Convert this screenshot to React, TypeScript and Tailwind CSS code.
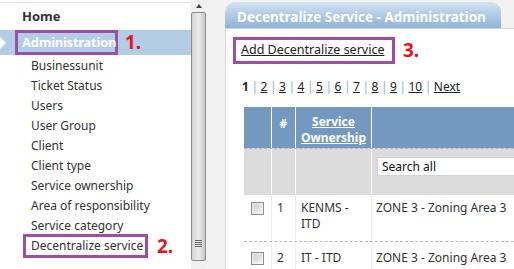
const font = { fontFamily: '"Noto Sans", "Open Sans", Arial, sans-serif' };

const menu = [
  "Businessunit",
  "Ticket Status",
  "Users",
  "User Group",
  "Client",
  "Client type",
  "Service ownership",
  "Area of responsibility",
  "Service category",
];

const pages = ["2", "3", "4", "5", "6", "7", "8", "9", "10", "Next"];

function Sidebar() {
  return (
    <div className="w-[191px] shrink-0 bg-white">
      <div className="mt-[2px] border-t border-[#e4e4e4]" />
      <div className="flex h-[27px] items-center pl-[22px] text-[13px] font-bold text-[#333]">Home</div>
      <div className="relative flex h-[25px] items-center bg-[#b3cde6]">
        <div className="absolute left-0 top-[7px] h-0 w-0 border-y-[6px] border-l-[6px] border-y-transparent border-l-white" />
        <div className="ml-[15px] flex h-[25px] w-[103px] items-center border-[3px] border-[#9b4fa5] pl-[4px] text-[13px] font-bold tracking-[-0.25px] text-white">
          Administration
        </div>
        <span className="ml-[7px] text-[19px] font-bold leading-none text-[#e8141c]">1.</span>
      </div>
      <div className="pt-[1px]">
        {menu.map((m) => (
          <div key={m} className="flex h-[20px] items-center pl-[31px] text-[12px] text-[#333]">
            {m}
          </div>
        ))}
        <div className="flex h-[20px] items-center pl-[23px]">
          <div className="flex h-[24px] w-[125px] items-center border-[3px] border-[#9b4fa5] pl-[5px] text-[12px] text-[#333]">
            Decentralize service
          </div>
          <span className="ml-[9px] text-[19px] font-bold leading-none text-[#e8141c]">2.</span>
        </div>
      </div>
    </div>
  );
}

function Scrollbar() {
  return (
    <div className="flex w-[15px] shrink-0 flex-col bg-[#f0f0f0]">
      <div className="flex h-[12px] items-center justify-center">
        <div className="h-0 w-0 border-x-[3px] border-b-[4px] border-x-transparent border-b-[#444]" />
      </div>
      <div className="flex h-[249px] flex-col justify-end rounded-[2px] border border-[#8c8c8c] bg-gradient-to-r from-[#d4d4d4] via-[#ececec] to-[#c8c8c8] pb-[13px]">
        <div className="mx-auto flex w-[7px] flex-col gap-[1px]">
          <div className="h-[1px] bg-[#666]" />
          <div className="h-[1px] bg-[#666]" />
          <div className="h-[1px] bg-[#666]" />
          <div className="h-[1px] bg-[#666]" />
        </div>
      </div>
    </div>
  );
}

function Checkbox() {
  return (
    <div className="h-[13px] w-[13px] border border-[#8f8f8f] bg-gradient-to-br from-[#dcdcdc] to-[#f8f8f8] p-[2px]">
      <div className="h-full w-full bg-gradient-to-br from-[#cfcfcf] to-[#eeeeee]" />
    </div>
  );
}

function Table() {
  return (
    <div className="ml-[18px] mt-[11px] w-[300px] text-[12px]">
      <div className="flex h-[41px] bg-[#7399c0] text-white font-bold">
        <div className="w-[28px] border-r border-white" />
        <div className="w-[24px] border-r border-white pt-[8px] text-center">#</div>
        <div className="w-[76px] border-r border-white pt-[7px] text-center leading-[16px] underline">
          Service
          <br />
          Ownership
        </div>
        <div className="flex-1" />
      </div>
      <div className="flex h-[47px] border-t border-dashed border-[#b8b8b8] bg-[#dcdcdc]">
        <div className="w-[28px] border-r border-white" />
        <div className="w-[24px] border-r border-white" />
        <div className="w-[76px] border-r border-white" />
        <div className="flex-1 pl-[5px] pt-[8px]">
          <div className="flex h-[19px] items-center border border-[#d4d4d4] bg-white pl-[4px] text-[12px] text-[#111]">
            Search all
          </div>
        </div>
      </div>
      <div className="flex h-[47px] border-b border-dashed border-[#b8b8b8] text-[#333] leading-[16px]">
        <div className="flex w-[28px] justify-center border-r border-[#eeeeee] pt-[7px]">
          <Checkbox />
        </div>
        <div className="w-[24px] border-r border-[#eeeeee] pl-[5px] pt-[5px]">1</div>
        <div className="w-[76px] border-r border-[#eeeeee] pl-[5px] pt-[5px]">
          KENMS -
          <br />
          ITD
        </div>
        <div className="flex-1 whitespace-nowrap pl-[4px] pt-[5px]">ZONE 3 - Zoning Area 3</div>
      </div>
      <div className="flex h-[47px] text-[#333] leading-[16px]">
        <div className="flex w-[28px] justify-center border-r border-[#eeeeee] pt-[10px]">
          <Checkbox />
        </div>
        <div className="w-[24px] border-r border-[#eeeeee] pl-[5px] pt-[8px]">2</div>
        <div className="w-[76px] border-r border-[#eeeeee] pl-[5px] pt-[8px]">IT - ITD</div>
        <div className="flex-1 whitespace-nowrap pl-[4px] pt-[8px]">ZONE 3 - Zoning Area 3</div>
      </div>
    </div>
  );
}

export default function App() {
  return (
    <div className="flex h-[269px] w-[514px] overflow-hidden bg-white" style={font}>
      <Sidebar />
      <Scrollbar />
      <div className="flex-1 bg-[#f2f2f2] pl-[19px] pt-[2px]">
        <div className="h-[26px] w-[276px] rounded-t-[10px] bg-gradient-to-b from-[#d3e3f2] to-[#90b3d6] pl-[12px] pt-[7px] text-[13.5px] font-bold leading-[16px] text-white">
          Decentralize Service - Administration
        </div>
        <div className="h-[300px] border-l border-t border-[#d8d8d8] bg-white">
          <div className="flex items-center pt-[8px] pl-[7px]">
            <div className="flex h-[27px] w-[162px] items-center border-[3px] border-[#9b4fa5] pl-[5px] text-[12.5px] text-[#222] underline">
              Add Decentralize service
            </div>
            <span className="ml-[8px] text-[19px] font-bold leading-none text-[#e8141c]">3.</span>
          </div>
          <div className="mt-[14px] flex items-center pl-[16px] text-[12px] text-[#222]">
            <span className="font-bold">1</span>
            {pages.map((p) => (
              <span key={p} className="flex items-center">
                <span className="px-[2.5px] text-[#8fb3d6]">|</span>
                <span className="underline">{p}</span>
              </span>
            ))}
          </div>
          <Table />
        </div>
      </div>
    </div>
  );
}
